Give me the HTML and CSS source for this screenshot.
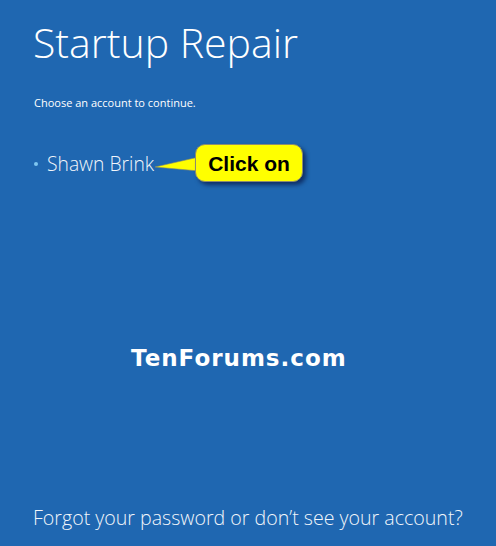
FILE: index.html
```html
<!DOCTYPE html>
<html>
<head>
<meta charset="utf-8">
<link rel="stylesheet" href="styles.css">
</head>
<body>
<div class="screen">
  <h1 class="title">Startup Repair</h1>
  <p class="prompt">Choose an account to continue.</p>
  <ul class="accounts">
    <li class="account"><span class="dot"></span><span class="name">Shawn Brink</span>
      <div class="callout">
        <svg class="pointer" width="46" height="20" viewBox="0 0 46 20">
          <path d="M0 13 L44 3 L44 17 Z" fill="#ffff00" stroke="#8a8a6a" stroke-width="0.6"/>
        </svg>
        <div class="bubble">Click on</div>
      </div>
    </li>
  </ul>
  <div class="watermark">TenForums.com</div>
  <div class="spacer"></div>
  <p class="forgot">Forgot your password or don’t see your account?</p>
</div>
</body>
</html>
```
FILE: styles.css
```css
html, body {
  margin: 0;
  padding: 0;
}
body {
  background: #1f67b1;
  width: 496px;
  height: 546px;
  overflow: hidden;
  font-family: "Open Sans", "Noto Sans", "Liberation Sans", sans-serif;
  color: #ffffff;
}
.screen {
  position: relative;
  height: 546px;
  box-sizing: border-box;
  padding: 0 0 0 33px;
  display: flex;
  flex-direction: column;
}
.title {
  margin: 14px 0 0 0;
  font-weight: 300;
  font-size: 41px;
  line-height: 56px;
  letter-spacing: 0;
}
.prompt {
  margin: 25px 0 0 1px;
  font-size: 11px;
  line-height: 16px;
  font-weight: 400;
}
.accounts {
  list-style: none;
  margin: 39px 0 0 0;
  padding: 0;
}
.account {
  position: relative;
  display: flex;
  align-items: center;
  height: 28px;
}
.dot {
  width: 4px;
  height: 4px;
  border-radius: 50%;
  background: #7fc6f0;
  margin: 0 9px 0 1px;
}
.name {
  font-weight: 300;
  font-size: 19.3px;
  line-height: 28px;
  color: #f2f6fb;
}
.callout {
  position: absolute;
  left: 122px;
  top: -6px;
  display: flex;
  align-items: center;
}
.pointer {
  display: block;
  margin-right: -6px;
  margin-top: 2px;
}
.bubble {
  background: #ffff00;
  border: 1px solid #8c8c70;
  border-radius: 10px;
  box-shadow: 3px 3px 4px rgba(0, 0, 40, 0.55);
  font-family: "Liberation Sans", Arial, sans-serif;
  font-weight: 700;
  font-size: 21px;
  color: #000000;
  width: 108px;
  height: 38px;
  line-height: 38px;
  text-align: center;
  box-sizing: border-box;
}
.watermark {
  position: absolute;
  left: 131px;
  top: 343px;
  font-family: "DejaVu Sans", Verdana, sans-serif;
  font-weight: 700;
  font-size: 23px;
  letter-spacing: 1px;
  line-height: 30px;
  color: #ffffff;
}
.spacer {
  flex: 1;
}
.forgot {
  margin: 0 0 14px 0;
  font-weight: 300;
  font-size: 19.6px;
  line-height: 28px;
  color: #f2f6fb;
}
```
